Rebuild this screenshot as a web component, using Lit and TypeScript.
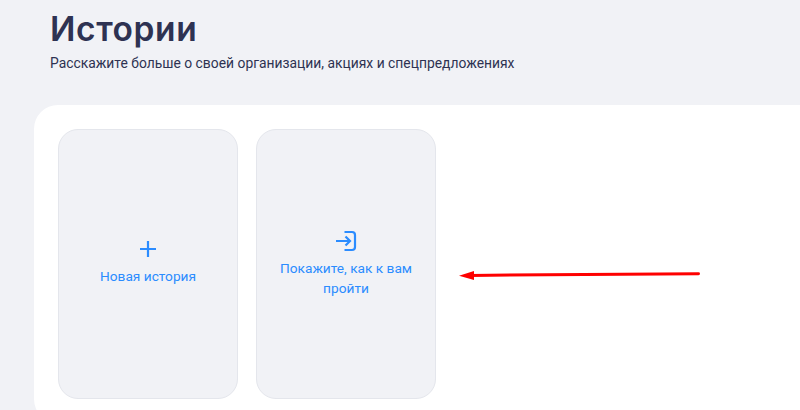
import {LitElement, css, html, svg} from 'lit'
import {customElement} from 'lit/decorators.js'

@customElement('app-root')
export class AppRoot extends LitElement {
  static styles = css`
    :host {
      display: block;
      height: 410px;
      overflow: hidden;
      position: relative;
      background: #f1f2f6;
      font-family: Roboto, 'Noto Sans', sans-serif;
      color: #2e3252;
    }

    .head {
      padding: 10px 0 0 50px;
      height: 105px;
      box-sizing: border-box;
    }

    h1 {
      margin: 0;
      font-family: Inter, 'Noto Sans', sans-serif;
      font-size: 33.5px;
      line-height: 38px;
      letter-spacing: 0.6px;
      font-weight: 600;
      color: #2e3252;
    }

    p {
      margin: 6px 0 0;
      font-size: 13.86px;
      line-height: 18px;
    }

    .panel {
      margin-left: 34px;
      padding: 24px;
      height: 318px;
      box-sizing: border-box;
      background: white;
      border-radius: 24px 0 0 24px;
      display: flex;
      gap: 18px;
    }

    .card {
      width: 180px;
      height: 270px;
      box-sizing: border-box;
      padding: 0 16px 1px;
      background: #f1f2f6;
      border: 1px solid #e4e6ec;
      border-radius: 20px;
      display: flex;
      flex-direction: column;
      align-items: center;
      justify-content: center;
      gap: 5px;
      color: #2b8cff;
      font-size: 13.7px;
      line-height: 20px;
      text-align: center;
    }

    .card.new {
      padding-bottom: 5px;
    }

    svg {
      display: block;
      width: 24px;
      height: 24px;
      fill: none;
      stroke: #2b8cff;
      stroke-width: 2.2;
    }

    .arrow {
      position: absolute;
      left: 450px;
      top: 260px;
      width: 260px;
      height: 30px;
      stroke: none;
    }
  `

  render() {
    return html`
      <div class="head">
        <h1>Истории</h1>
        <p>Расскажите больше о своей организации, акциях и спецпредложениях</p>
      </div>
      <div class="panel">
        <div class="card new">
          <svg viewBox="0 0 24 24"><path d="M12 4v16M4 12h16"/></svg>
          Новая история
        </div>
        <div class="card">
          <svg viewBox="0 0 24 24">
            <path d="M2 12h14M11.500 7.500 16 12l-4.500 4.500M10.500 3H18q3 0 3 3v12q0 3-3 3h-7.500"/>
          </svg>
          Покажите, как к вам пройти
        </div>
      </div>
      <svg class="arrow" viewBox="0 0 260 30">
        ${svg`<path d="M248.500 13.700 L20 15.400" stroke="#fe0000" stroke-width="3" stroke-linecap="round"/>
        <path d="M9 15.700 L24 11 L24 20 Z" fill="#fe0000" stroke="none"/>`}
      </svg>
    `
  }
}
